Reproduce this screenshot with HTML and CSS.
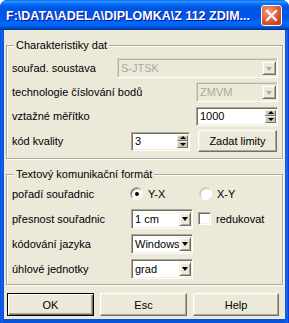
FILE: index.html
```html
<!DOCTYPE html>
<html>
<head>
<meta charset="utf-8">
<link rel="stylesheet" href="styles.css">
</head>
<body>
<div class="window">
  <div class="titlebar">
    <span class="title">F:\DATA\ADELA\DIPLOMKA\Z 112 ZDIM...</span>
    <span class="close">
      <svg width="13" height="13" viewBox="0 0 13 13"><path d="M2 2 L11 11 M11 2 L2 11" stroke="#fff" stroke-width="2.2" stroke-linecap="square"/></svg>
    </span>
  </div>
  <div class="client">
    <div class="group g1">
      <div class="legend">Charakteristiky dat</div>
      <div class="row">
        <span class="lbl">souřad. soustava</span>
        <div class="field combo disabled w161"><span class="val">S-JTSK</span><span class="arrow"><i class="tri"></i></span></div>
      </div>
      <div class="row">
        <span class="lbl">technologie číslování bodů</span>
        <div class="field combo disabled w82"><span class="val">ZMVM</span><span class="arrow"><i class="tri"></i></span></div>
      </div>
      <div class="row">
        <span class="lbl">vztažné měřítko</span>
        <div class="field spin w82"><span class="val">1000</span><span class="spinbtns"><span class="sb"><i class="up"></i></span><span class="sb"><i class="dn"></i></span></span></div>
      </div>
      <div class="row tall">
        <span class="lbl">kód kvality</span>
        <div class="field spin w59"><span class="val">3</span><span class="spinbtns"><span class="sb"><i class="up"></i></span><span class="sb"><i class="dn"></i></span></span></div>
        <div class="btn limits">Zadat limity</div>
      </div>
    </div>

    <div class="group g2">
      <div class="legend">Textový komunikační formát</div>
      <div class="grid">
        <span class="lbl">pořadí souřadnic</span>
        <div class="radios">
          <span class="ritem first"><span class="radio on"></span>Y-X</span>
          <span class="ritem"><span class="radio"></span>X-Y</span>
        </div>

        <span class="lbl">přesnost souřadnic</span>
        <div class="field combo"><span class="val">1 cm</span><span class="arrow"><i class="tri"></i></span></div>
        <span class="check"><span class="box"></span>redukovat</span>

        <span class="lbl">kódování jazyka</span>
        <div class="field combo"><span class="val">Windows</span><span class="arrow"><i class="tri"></i></span></div>
        <span></span>

        <span class="lbl">úhlové jednotky</span>
        <div class="field combo"><span class="val">grad</span><span class="arrow"><i class="tri"></i></span></div>
        <span></span>
      </div>
    </div>

    <div class="buttons">
      <div class="btn default w87">OK</div>
      <div class="btn w87">Esc</div>
      <div class="btn w86">Help</div>
    </div>
  </div>
</div>
</body>
</html>
```

FILE: styles.css
```css
* { box-sizing: border-box; }
html, body { margin: 0; padding: 0; background: #fff; }
body { font-family: "Liberation Sans", Arial, sans-serif; font-size: 11px; color: #000; }

.window {
  width: 289px;
  height: 323px;
  display: flex;
  flex-direction: column;
  background: linear-gradient(90deg, #0831d9 0, #166aee 1px, #0855dd 3px, #0855dd 285px, #166aee 287px, #0831d9 289px);
  border-radius: 7px 7px 0 0;
  overflow: hidden;
}

.titlebar {
  height: 30px;
  flex: none;
  display: flex;
  align-items: center;
  padding: 0 6px 0 6px;
  background: linear-gradient(#0058ee 0%, #3593ff 4%, #288eff 7%, #127dff 10%, #036ffc 14%, #0262ee 18%, #0057e5 24%, #0054e3 30%, #0055eb 56%, #005bf5 66%, #026afe 76%, #0062ef 86%, #0052d6 92%, #0040ab 96%, #003092 100%);
}
.title {
  flex: 1;
  color: #fff;
  font-weight: bold;
  font-size: 12.5px;
  text-shadow: 1px 1px 0 #0f1089;
  white-space: nowrap;
  margin-top: 1px;
}
.close {
  width: 21px;
  height: 21px;
  flex: none;
  margin-right: 1px;
  margin-top: 1px;
  border: 1px solid #fff;
  border-radius: 3px;
  background: radial-gradient(circle at 35% 30%, #f2a68c 0%, #e4704e 35%, #d2492a 70%, #b8351b 100%);
  display: flex;
  align-items: center;
  justify-content: center;
}

.client {
  flex: 1;
  margin: 0 4px 4px 4px;
  background: #ece9d8;
  display: flex;
  flex-direction: column;
}

.group {
  margin: 15px 2px 0 2px;
  border: 1px solid #aca899;
  box-shadow: inset 1px 1px 0 #fff, 1px 1px 0 #fff;
  padding: 0 4px 0 5px;
  display: flex;
  flex-direction: column;
}
.g1 { height: 114px; padding-bottom: 4px; }
.g2 { height: 111px; }

.legend {
  align-self: flex-start;
  margin: -7px 0 0 2px;
  padding: 0 2px;
  height: 13px;
  line-height: 13px;
  background: #ece9d8;
}
.g1 .legend { margin-bottom: 4px; }

.row {
  height: 24px;
  display: flex;
  align-items: center;
}
.row.tall { height: 26px; }
.lbl { white-space: nowrap; }
.row .field { margin-left: auto; }

.field {
  height: 20px;
  display: flex;
  align-items: stretch;
  background: #fff;
  border: 1px solid;
  border-color: #aca899 #fff #fff #aca899;
  box-shadow: inset 1px 1px 0 #716f64, inset -1px -1px 0 #f1efe2;
  padding: 2px 1px 2px 2px;
}
.field .val {
  flex: 1;
  display: flex;
  align-items: center;
  padding-left: 1px;
  white-space: nowrap;
  min-width: 0;
}
.w161 { width: 161px; }
.w82 { width: 82px; }
.w59 { width: 59px; }

.field.disabled {
  background: #ece9d8;
  color: #aca899;
  border-color: #d8d4c4 #fff #fff #d8d4c4;
  box-shadow: inset 1px 1px 0 #b7b4a4, inset -1px -1px 0 #f1efe2;
}

.arrow {
  width: 14px;
  flex: none;
  background: #ece9d8;
  border: 1px solid;
  border-color: #f1efe2 #716f64 #716f64 #f1efe2;
  box-shadow: inset 1px 1px 0 #fff, inset -1px -1px 0 #aca899;
  display: flex;
  align-items: center;
  justify-content: center;
}
.grid .arrow { width: 12px; }
.tri {
  width: 0; height: 0;
  border-left: 3.5px solid transparent;
  border-right: 3.5px solid transparent;
  border-top: 4px solid #000;
  margin-top: 1px;
}
.disabled .tri { border-top-color: #aca899; }

.spin { height: 19px; }
.spinbtns {
  width: 11px;
  flex: none;
  display: flex;
  flex-direction: column;
}
.sb {
  flex: 1;
  background: #c9c7be;
  border: 1px solid;
  border-color: #f1efe2 #716f64 #716f64 #f1efe2;
  display: flex;
  align-items: center;
  justify-content: center;
}
.up, .dn { width: 0; height: 0; border-left: 3px solid transparent; border-right: 3px solid transparent; }
.up { border-bottom: 3px solid #000; }
.dn { border-top: 3px solid #000; }

.btn {
  height: 23px;
  display: flex;
  align-items: center;
  justify-content: center;
  background: #ece9d8;
  border: 1px solid;
  border-color: #fff #716f64 #716f64 #fff;
  box-shadow: inset -1px -1px 0 #aca899, inset 1px 1px 0 #f1efe2;
  white-space: nowrap;
}
.btn.limits { width: 79px; height: 22px; margin-left: 8px; margin-right: 1px; }
.row .spin { margin-left: auto; }

.grid {
  display: grid;
  grid-template-columns: 119px 62px 1fr;
  grid-auto-rows: 25px;
  align-items: center;
}
.grid .field { width: 62px; }
.radios {
  grid-column: 2 / span 2;
  display: flex;
  align-items: center;
  margin-left: -1px;
}
.ritem { display: flex; align-items: center; gap: 5px; }
.ritem.first { width: 69px; }
.radio {
  width: 13px; height: 13px;
  border-radius: 50%;
  background: #fff;
  border: 1px solid;
  border-color: #aca899 #fff #fff #aca899;
  box-shadow: inset 1px 1px 0 #716f64, inset -1px -1px 0 #f1efe2;
  display: flex;
  align-items: center;
  justify-content: center;
}
.radio.on::after {
  content: "";
  width: 4px; height: 4px;
  border-radius: 50%;
  background: #000;
}
.radios .ritem:not(.first) .radio {
  border-color: #d8d4c4 #fff #fff #d8d4c4;
  box-shadow: inset 1px 1px 0 #c9c6b6;
}
.check { display: flex; align-items: center; gap: 5px; margin-left: 5px; }
.box {
  width: 13px; height: 13px;
  background: #fff;
  border: 1px solid;
  border-color: #aca899 #fff #fff #aca899;
  box-shadow: inset 1px 1px 0 #716f64, inset -1px -1px 0 #f1efe2;
}

.buttons {
  display: flex;
  gap: 6px;
  margin: 8px 0 0 3px;
}
.w87 { width: 87px; }
.w86 { width: 86px; }
.btn.default {
  border: 1px solid #000;
  box-shadow: inset 1px 1px 0 #fff, inset -1px -1px 0 #716f64, inset -2px -2px 0 #aca899;
}
```
